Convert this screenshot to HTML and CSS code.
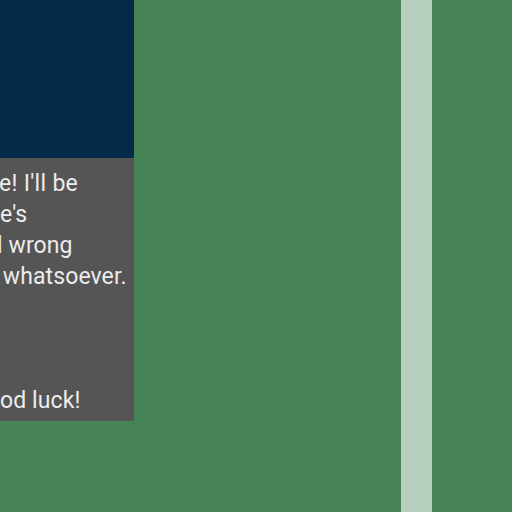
FILE: index.html
```html
<!DOCTYPE html>
<html>
<head>
<meta charset="utf-8">
<link rel="stylesheet" href="styles.css">
</head>
<body>
<div class="layout">
  <div class="left">
    <div class="header"></div>
    <div class="message">
      <div class="line l1">e! I'll be</div>
      <div class="line l2">e's</div>
      <div class="line l3">l wrong</div>
      <div class="line l4">&nbsp;whatsoever.</div>
      <div class="line blank">&nbsp;</div>
      <div class="line blank">&nbsp;</div>
      <div class="line blank">&nbsp;</div>
      <div class="line l5">od luck!</div>
    </div>
  </div>
  <div class="gap"></div>
  <div class="stripe"></div>
  <div class="rest"></div>
</div>
</body>
</html>
```

FILE: styles.css
```css
html, body {
  margin: 0;
  padding: 0;
  height: 100%;
}
body {
  background: #468455;
  font-family: Roboto, "Noto Sans", sans-serif;
}
.layout {
  display: grid;
  grid-template-columns: 134px 267px 31px 1fr;
  height: 512px;
}
.left {
  display: flex;
  flex-direction: column;
  align-items: stretch;
}
.header {
  height: 158px;
  background: #052a49;
}
.message {
  background: #555555;
  height: 263px;
  box-sizing: border-box;
  padding-top: 10px;
  overflow: hidden;
  color: #ececec;
  font-size: 23px;
  line-height: 31px;
  letter-spacing: 0.1px;
}
.line {
  white-space: nowrap;
}
.l1 {
  margin-left: -1px;
  letter-spacing: 0.3px;
}
.l3 {
  margin-left: -3px;
}
.l4 {
  margin-left: -3px;
}
.stripe {
  background: #b7cfbf;
}
```
